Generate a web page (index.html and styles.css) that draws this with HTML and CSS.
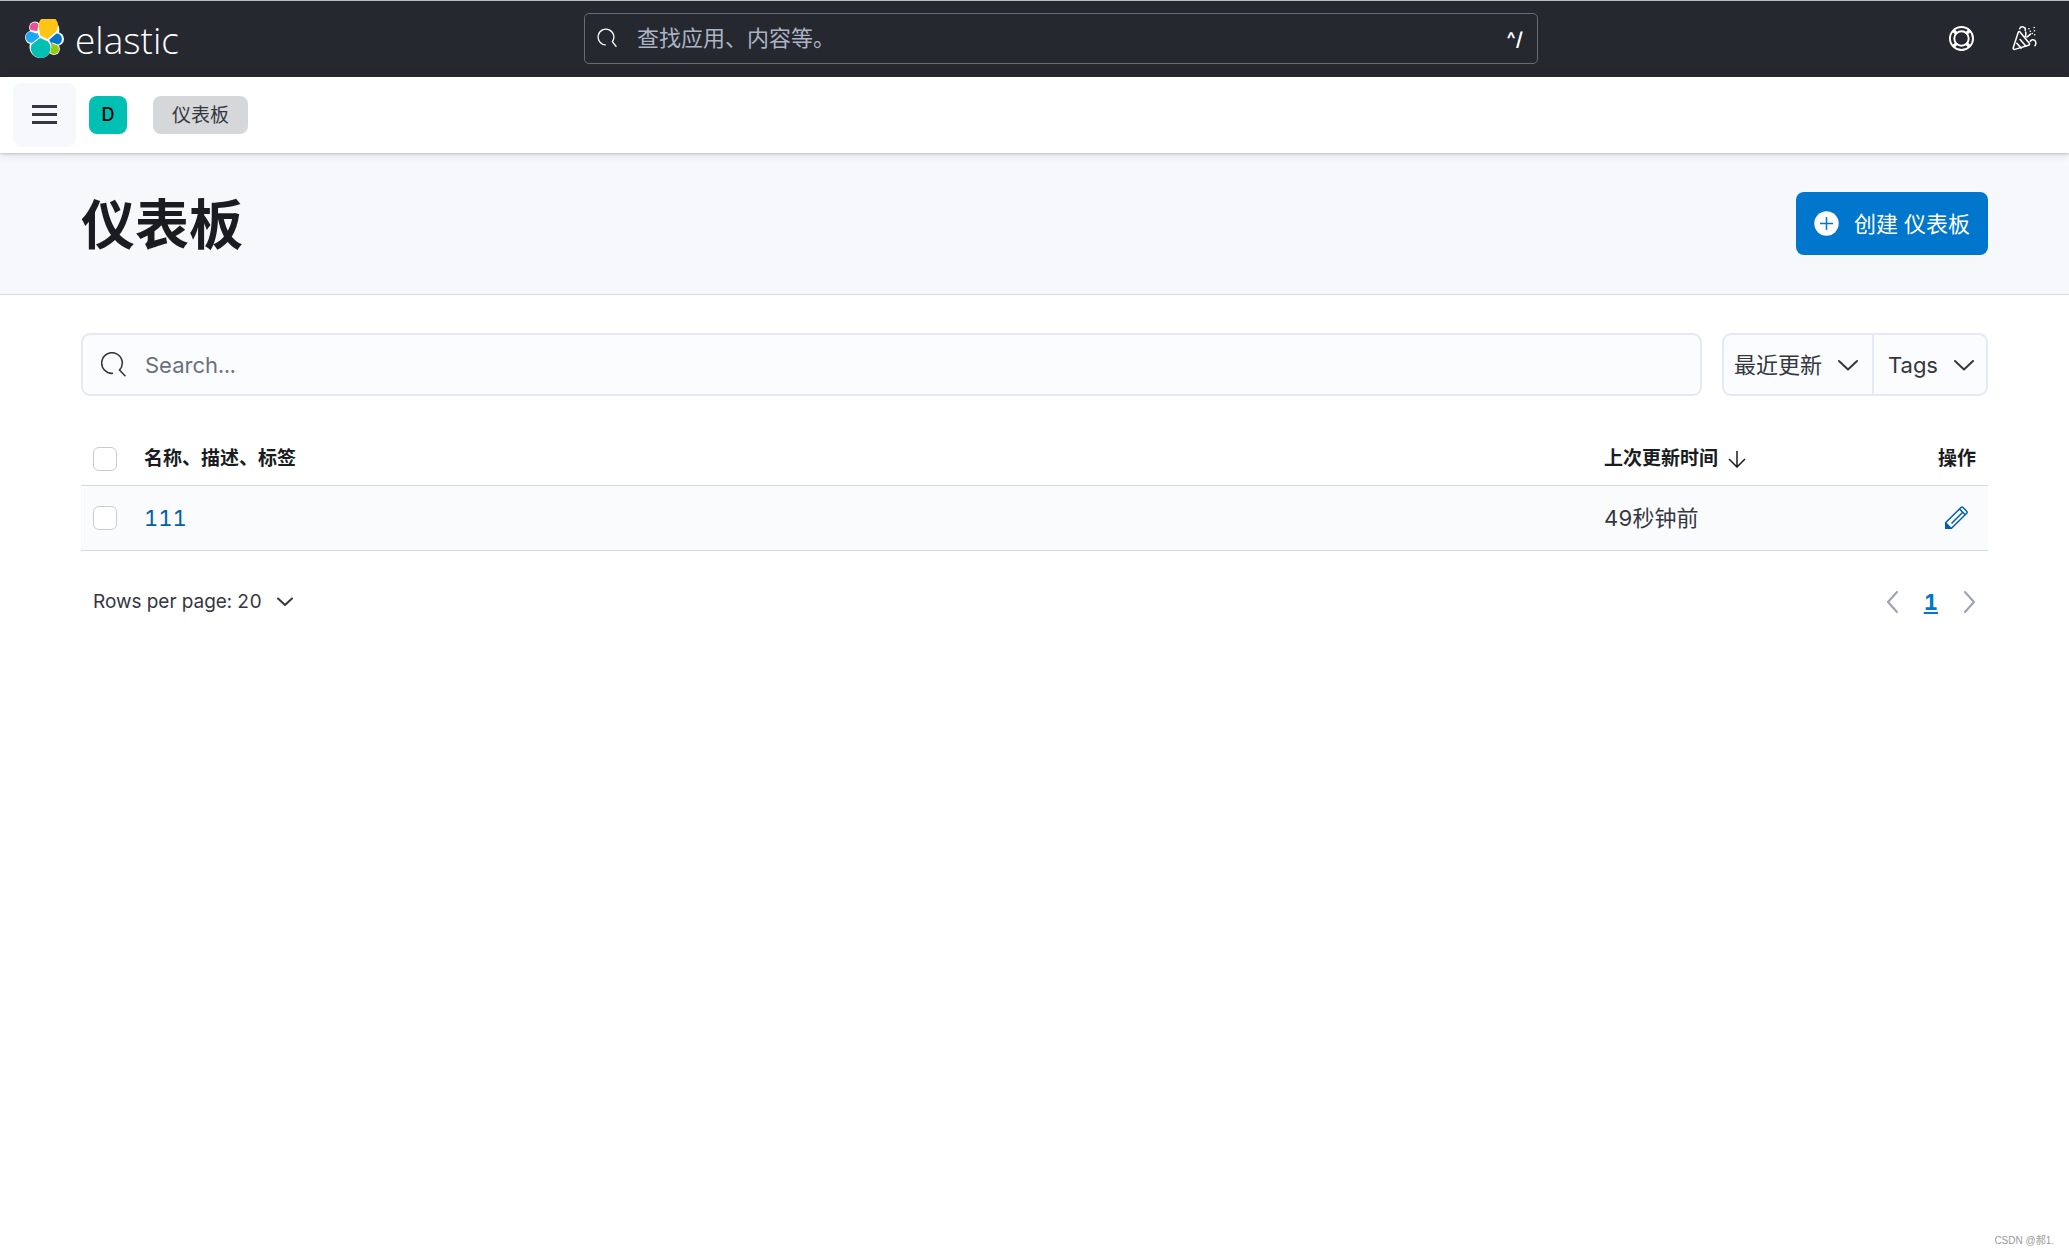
FILE: index.html
```html
<!DOCTYPE html>
<html lang="zh-CN">
<head>
<meta charset="utf-8">
<meta name="viewport" content="width=device-width, initial-scale=1">
<title>仪表板 - Elastic</title>
<link rel="stylesheet" href="styles.css">
</head>
<body>
<header class="topbar">
  <a class="brand" href="#">
    <svg class="brand-mark" viewBox="0 0 39 39" aria-hidden="true">
      <g fill="#fff"><circle cx="23.300" cy="11" r="11"/><circle cx="10" cy="8.500" r="5.900"/><circle cx="6.700" cy="18.500" r="6.700"/><circle cx="15.500" cy="28" r="11"/><circle cx="32.300" cy="20" r="6.700"/><circle cx="29" cy="30" r="5.900"/><circle cx="19" cy="19" r="8"/></g>
      <path fill="#fec514" d="M15.300 16.600 22.500 20l7.600-6.500a9.700 9.700 0 1 0-16.100-4.300z"/>
      <path fill="#f04e98" d="M6 11.300a4.700 4.700 0 1 1 7.300-6.200l-.9 6.800z"/>
      <path fill="#1ba9f5" d="M5.500 12.600 13 15l1.400 3.200-7.200 5.600a5.600 5.600 0 0 1-1.700-11.200z"/>
      <path fill="#00bfb3" d="m15 18.900 8 3.600 2 3.500a9.800 9.800 0 1 1-18.500-.2z"/>
      <path fill="#0077cc" d="M31.500 14.500a5.600 5.600 0 0 1 1.600 10.900L25 22.700l-.8-2z"/>
      <path fill="#93c90e" d="m26 24.200 6.600 2.400a4.700 4.700 0 0 1-7.200 7.100l1-6z"/>
    </svg>
    <span class="brand-name">elastic</span>
  </a>
  <label class="global-search">
    <svg class="icon-sm" viewBox="0 0 16 16" fill="none" stroke="currentColor" aria-hidden="true"><path d="M7 13.500a6.300 6.300 0 1 1 5.300-2.600l3.200 4.100"/></svg>
    <input type="search" placeholder="查找应用、内容等。" aria-label="查找应用、内容等。">
    <span class="shortcut">^/</span>
  </label>
  <nav class="top-actions">
    <button type="button" class="plain" aria-label="帮助">
      <svg class="icon" viewBox="0 0 26 26" fill="none" stroke="currentColor" stroke-width="2" aria-hidden="true"><circle cx="13" cy="13" r="12"/><circle cx="13" cy="13" r="7.500"/><path stroke-width="3.500" d="m4.500 4.500 3.700 3.700M21.500 4.500l-3.700 3.700M4.500 21.500l3.700-3.700M21.500 21.500l-3.700-3.700"/></svg>
    </button>
    <button type="button" class="plain" aria-label="新增功能">
      <svg class="icon" viewBox="0 0 26 26" fill="none" stroke="currentColor" stroke-width="1.600" stroke-linecap="round" stroke-linejoin="round" aria-hidden="true"><path d="M6.500 6.500c.5-1 1.500-1 2 0l9.500 11.500c.5.900.2 1.800-.8 2L3 24.300c-1.300.3-2-.5-1.700-1.700zM5 18l4.500 5M8.500 14l6 7M8 2.800c1.200-3 6.500-2.500 5.800 1.700M14 11c.2-1.500.7-3 .2-4.800M15.500 11.500l3.700-3M19 16c2-3.800 7.800-1 5 4.500M17.500 2.800h.1M19 5.500h.1M23 1.500h.1M23.300 5h.1M21 7.800h.1M23.500 9h.1"/></svg>
    </button>
  </nav>
</header>
<div class="crumbbar">
  <button type="button" class="menu-button" aria-label="菜单"><svg viewBox="0 0 25 20" aria-hidden="true"><path fill="#343741" d="M0 0h25v3H0zM0 8h25v3H0zM0 16h25v3H0z"/></svg></button>
  <button type="button" class="space-avatar" aria-label="Default">D</button>
  <nav><a class="crumb" href="#" aria-current="page">仪表板</a></nav>
</div>
<main>
  <div class="page-header">
    <h1>仪表板</h1>
    <button type="button" class="create"><svg class="icon" viewBox="0 0 25 25" aria-hidden="true"><circle cx="12.500" cy="12.500" r="12.200" fill="#fff"/><path d="M12.500 6v13M6 12.500h13" stroke="#07c" stroke-width="1.500"/></svg>创建 仪表板</button>
  </div>
  <div class="content">
    <div class="filters">
      <label class="search">
        <svg class="icon" viewBox="0 0 25 25" fill="none" stroke="currentColor" stroke-width="1.600" aria-hidden="true"><path d="M12 21.300a10.300 10.300 0 1 1 6.500-3.200l6 6.200"/></svg>
        <input type="search" placeholder="Search..." aria-label="Search">
      </label>
      <div class="filter-group">
        <button type="button" class="sort">最近更新<svg class="chevron" viewBox="0 0 20 20" aria-hidden="true"><path d="m1 6 9 8.500L19 6"/></svg></button>
        <button type="button" class="tags">Tags<svg class="chevron" viewBox="0 0 20 20" aria-hidden="true"><path d="m1 6 9 8.500L19 6"/></svg></button>
      </div>
    </div>
    <table>
      <thead>
        <tr>
          <th class="col-check"><input type="checkbox" aria-label="选择所有行"></th>
          <th>名称、描述、标签</th>
          <th class="col-time"><span class="sorted">上次更新时间<svg class="arrow" viewBox="0 0 18 18" aria-hidden="true"><path d="M9 1v16M1 9l8 8 8-8"/></svg></span></th>
          <th class="col-actions">操作</th>
        </tr>
      </thead>
      <tbody>
        <tr>
          <td class="col-check"><input type="checkbox" aria-label="选择 111"></td>
          <td><a class="item" href="#">111</a></td>
          <td class="col-time">49秒钟前</td>
          <td class="col-actions"><button type="button" class="plain edit" aria-label="编辑"><svg class="icon" viewBox="0 0 25 25" fill="none" stroke="currentColor" stroke-width="1.500" stroke-linejoin="round" aria-hidden="true"><path d="M1.800 17.500 17 2.500q1-1 2 0l3.700 3.700q1 1 0 2L7.500 23.300H1.800zM7.500 18.500 19 7M15.500 4l6 6"/><path fill="currentColor" d="M1.800 18 7 23.300H1.800z"/></svg></button></td>
        </tr>
      </tbody>
    </table>
    <div class="table-footer">
      <button type="button" class="plain rows">Rows per page: 20<svg class="chevron-sm" viewBox="0 0 16 16" aria-hidden="true"><path d="m1 4.500 7 6.500 7-6.500"/></svg></button>
      <nav class="pager">
        <button type="button" class="plain" aria-label="上一页" disabled><svg viewBox="0 0 12 22" aria-hidden="true"><path d="M11 1 2 11l9 10"/></svg></button>
        <a href="#" aria-current="page">1</a>
        <button type="button" class="plain" aria-label="下一页" disabled><svg viewBox="0 0 12 22" aria-hidden="true"><path d="m1 1 9 10-9 10"/></svg></button>
      </nav>
    </div>
  </div>
</main>
<footer class="credit">CSDN @郝1.</footer>
</body>
</html>
```
FILE: styles.css
```css
* { box-sizing: border-box; }
body {
  margin: 0;
  min-height: 100vh;
  display: flex;
  flex-direction: column;
  background: #fff;
  color: #343741;
  font: 400 22px/32px Inter, "Noto Sans CJK SC", sans-serif;
  font-variant-numeric: tabular-nums;
}
button, input { font: inherit; font-variant-numeric: inherit; color: inherit; }
button { cursor: pointer; }
a { text-decoration: none; }
svg { flex: none; display: block; }
main { flex: 1; }
input[type="search"] {
  flex: 1;
  min-width: 0;
  padding: 0;
  border: 0;
  outline: 0;
  background: none;
  appearance: none;
}
.plain { display: flex; align-items: center; padding: 0; border: 0; background: none; }
.icon { width: 25px; height: 25px; }
.icon-sm { width: 20px; height: 20px; }

.topbar {
  display: flex;
  justify-content: space-between;
  align-items: center;
  height: 77px;
  padding: 0 32px 2px 25px;
  border-top: 1px solid #b9bfbb;
  background: #25282f;
  color: #fff;
}
.brand { display: flex; align-items: center; gap: 11px; color: #fff; }
.brand-mark { width: 39px; height: 39px; }
.brand-name { padding-top: 3px; font: 300 37px/40px "Open Sans", sans-serif; }
.global-search {
  display: flex;
  align-items: center;
  flex: 0 1 954px;
  height: 51px;
  padding: 0 14px 0 12px;
  border: 1px solid #6a6c70;
  border-radius: 5px;
}
.global-search input { margin-left: 20px; }
.global-search input::placeholder { color: #abb4c4; opacity: 1; }
.shortcut { padding-top: 3px; font-size: 19px; font-weight: 600; font-feature-settings: "calt" 0; }
.top-actions { display: flex; justify-content: flex-end; gap: 38px; padding-left: 6px; }

.crumbbar {
  position: relative;
  display: flex;
  align-items: center;
  height: 76px;
  padding: 0 13px;
  background: #fff;
  box-shadow: 0 1px 2px rgba(52, 55, 65, .2), 0 2px 8px rgba(52, 55, 65, .14);
}
.menu-button {
  display: grid;
  place-items: center;
  width: 63px;
  height: 64px;
  padding: 0;
  border: 0;
  border-radius: 8px;
  background: #f7f8fc;
}
.menu-button svg { width: 25px; height: 20px; }
.space-avatar {
  width: 38px;
  height: 38px;
  margin: 0 26px 0 13px;
  padding: 0;
  border: 0;
  border-radius: 8px;
  background: #00bfb3;
  color: #000;
  font-size: 18px;
  font-weight: 500;
}
.crumb {
  display: block;
  padding: 2px 19px 0;
  border-radius: 8px;
  background: #d6d7d9;
  color: #343741;
  font-size: 19px;
  line-height: 36px;
}

.page-header {
  display: flex;
  align-items: center;
  justify-content: space-between;
  height: 142px;
  padding: 0 81px;
  border-bottom: 1px solid #d3dae6;
  background: #f7f8fc;
}
h1 { margin: 0; padding-top: 5px; color: #1a1c21; font-size: 54px; line-height: 64px; font-weight: 700; }
.create {
  display: flex;
  align-items: center;
  gap: 15px;
  height: 63px;
  padding: 0 18px;
  border: 0;
  border-radius: 8px;
  background: #07c;
  color: #fff;
}

.content { padding: 38px 81px; }
.filters { display: flex; gap: 20px; }
.search {
  flex: 1;
  display: flex;
  align-items: center;
  gap: 19px;
  height: 63px;
  padding: 0 18px;
  border: 2px solid #e6e9f4;
  border-radius: 9px;
  background: #fbfcfd;
}
.search input::placeholder { color: #6a717d; opacity: 1; }
.filter-group {
  display: flex;
  border: 2px solid #e6e9f4;
  border-radius: 9px;
  background: #fbfcfd;
}
.filter-group button {
  display: flex;
  align-items: center;
  gap: 16px;
  border: 0;
  background: none;
}
.filter-group .sort { padding: 0 14px 0 10px; }
.filter-group .tags { padding: 0 12px 0 14px; border-left: 2px solid #e6e9f4; }
.chevron { width: 20px; height: 20px; }
.chevron-sm { width: 16px; height: 16px; }
.chevron path, .chevron-sm path, .pager path {
  fill: none;
  stroke: currentColor;
  stroke-width: 2;
  stroke-linecap: round;
  stroke-linejoin: round;
}

table { width: 100%; margin-top: 38px; border-collapse: collapse; table-layout: fixed; }
th, td { padding: 0 12px; border-bottom: 1px solid #d3dae6; text-align: left; }
th { height: 51px; color: #1a1c21; font-size: 19px; font-weight: 700; }
td { height: 65px; background: #fafbfd; }
.col-check { width: 51px; padding-right: 0; }
.col-time { width: 312px; }
.col-actions { width: 84px; text-align: right; padding-left: 0; }
input[type="checkbox"] {
  display: block;
  width: 24px;
  height: 24px;
  margin: 0;
  border: 1px solid #c9cbcd;
  border-radius: 6px;
  background: #fff;
  appearance: none;
}
.sorted { display: flex; align-items: center; gap: 10px; }
.arrow { width: 18px; height: 18px; }
.arrow path { fill: none; stroke: currentColor; stroke-width: 1.5; }
.item { color: #0061a6; }
.edit { margin: 0 7px 0 auto; color: #0061a6; }

.table-footer {
  display: flex;
  align-items: center;
  justify-content: space-between;
  margin-top: 35px;
  padding: 0 12px;
}
.rows { gap: 15px; font-size: 19px; }
.pager { display: flex; align-items: center; gap: 26px; color: #98a2b3; }
.pager a { color: #07c; font-weight: 700; text-decoration: underline; }
.pager svg { width: 12px; height: 22px; }
.credit { padding: 0 15px 6px; color: #999; font: 10px/18px "Liberation Sans", "Noto Sans CJK SC", sans-serif; text-align: right; }
```
